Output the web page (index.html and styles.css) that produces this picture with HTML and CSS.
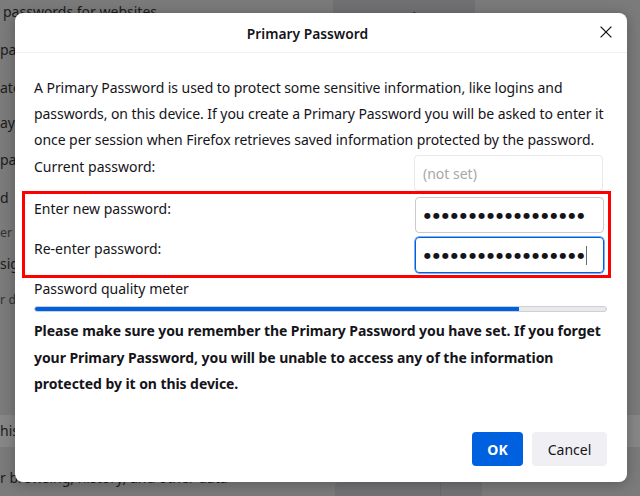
FILE: index.html
```html
<!DOCTYPE html>
<html lang="en">
<head>
<meta charset="utf-8">
<title>Primary Password</title>
<link rel="stylesheet" href="styles.css">
</head>
<body>
<div class="page">
  <div class="row r1">
    <span class="lead">passwords for websites</span>
    <span class="exc">Exceptions</span>
  </div>
  <div class="row r2"><span>pa</span></div>
  <div class="row r3"><span>ate</span></div>
  <div class="row r4"><span>ay</span></div>
  <div class="row r5"><span>pas</span></div>
  <div class="row r6"><span>d</span></div>
  <div class="row r7 small"><span>er P</span></div>
  <div class="row r8"><span>sig</span></div>
  <div class="row r9 small"><span>r de</span></div>
  <div class="row r10 band"><span>his</span></div>
  <div class="row r11"><span>r browsing, history, and other data</span></div>
  <div class="row r12"><div class="bbox"><div class="bbox-a"></div><div class="bbox-b"></div></div></div>
</div>

<div class="dialog" role="dialog" aria-label="Primary Password">
  <div class="dlg-head">
    <h1 class="dlg-title">Primary Password</h1>
    <button class="close" aria-label="Close">
      <svg width="12" height="12" viewBox="0 0 12 12"><path d="M0.6 0.6 L11.4 11.4 M11.4 0.6 L0.6 11.4" stroke="#15141a" stroke-width="1.3" fill="none"/></svg>
    </button>
  </div>
  <div class="dlg-body">
    <p class="intro">A Primary Password is used to protect some sensitive information, like logins and<br>passwords, on this device. If you create a Primary Password you will be asked to enter it<br>once per session when Firefox retrieves saved information protected by the password.</p>
    <div class="field">
      <label class="lbl">Current password:</label>
      <div class="input disabled">(not set)</div>
    </div>
    <div class="highlight">
      <div class="field">
        <label class="lbl">Enter new password:</label>
        <div class="input"><span class="dots">●●●●●●●●●●●●●●●●●●</span></div>
      </div>
      <div class="field second">
        <label class="lbl">Re-enter password:</label>
        <div class="input focus"><span class="dots">●●●●●●●●●●●●●●●●●●</span><span class="caret"></span></div>
      </div>
    </div>
    <div class="meter-lbl">Password quality meter</div>
    <div class="meter"><div class="meter-fill" style="width:85%"></div></div>
    <p class="warn">Please make sure you remember the Primary Password you have set. If you forget<br>your Primary Password, you will be unable to access any of the information<br>protected by it on this device.</p>
    <div class="buttons">
      <button class="btn primary">OK</button>
      <button class="btn cancel">Cancel</button>
    </div>
  </div>
</div>
</body>
</html>
```
FILE: styles.css
```css
* { box-sizing: border-box; }
html, body { margin: 0; padding: 0; }
body {
  width: 640px;
  height: 496px;
  overflow: hidden;
  background: #7b7b7b;
  font-family: "Noto Sans", "Open Sans", sans-serif;
  color: #1b1b1d;
  position: relative;
}

/* dimmed page behind the dialog */
.page { display: flex; flex-direction: column; }
.row { height: 24px; line-height: 24px; font-size: 14px; white-space: nowrap; }
.r1 { display: flex; padding-left: 3px; }
.r1 .lead { width: 330px; }
.exc {
  display: block;
  width: 142px;
  height: 36px;
  line-height: 36px;
  margin-top: 0;
  background: #717173;
  border-radius: 0 0 4px 4px;
  text-align: center;
  font-weight: 600;
}
.r2 { margin-top: 14px; }
.r3 { margin-top: 14px; }
.r4 { margin-top: 11px; }
.r5 { margin-top: 13px; }
.r6 { margin-top: 14px; }
.r7 { margin-top: 11px; }
.r8 { margin-top: 7px; }
.r9 { margin-top: 12px; }
.small { font-size: 12.5px; color: #333336; }
.band { margin-top: 103px; height: 32px; line-height: 32px; background: #878787; }
.r11 { margin-top: 19px; }
.r12 { margin-top: -8px; height: 30px; }
.bbox { margin-left: 335px; width: 147px; height: 30px; display: flex; }
.bbox-a { width: 105px; background: #737375; border-radius: 4px 0 0 0; }
.bbox-b { flex: 1; background: #737375; border-left: 1px solid #6a6a6c; }

/* dialog */
.dialog {
  position: absolute;
  left: 15px;
  top: 13px;
  width: 612px;
  height: 469px;
  background: #fff;
  border-radius: 8px;
  box-shadow: 0 2px 14px rgba(0,0,0,0.28);
  display: flex;
  flex-direction: column;
  color: #15141a;
}
.dlg-head {
  height: 40px;
  border-bottom: 1px solid #f0f0f4;
  display: flex;
  align-items: center;
  padding: 2px 15px 0 0;
}
.dlg-title {
  flex: 1;
  margin: 0;
  text-align: center;
  font-size: 13.8px;
  font-weight: 600;
  line-height: 20px;
}
.close {
  width: 12px;
  height: 12px;
  padding: 0;
  border: 0;
  background: none;
  display: flex;
  margin-top: -4px;
}
.dlg-body {
  flex: 1;
  display: flex;
  flex-direction: column;
  padding: 0 20px 16px 19px;
}
.intro {
  margin: 22px 0 0;
  font-size: 14px;
  letter-spacing: -0.06px;
  line-height: 26px;
  white-space: nowrap;
}
.field {
  display: flex;
  align-items: flex-start;
  justify-content: space-between;
  margin-top: 2px;
  padding-right: 4px;
}
.lbl { font-size: 14px; line-height: 24px; }
.input {
  width: 189px;
  height: 36px;
  border: 1px solid #c9c9cf;
  border-radius: 4px;
  padding-left: 8px;
  display: flex;
  align-items: center;
  font-size: 14px;
}
.input.disabled { border-color: #e9e9ec; color: #a7a7ab; }
.input.focus { border-color: #0061e0; box-shadow: 0 0 0 0.5px #0061e0; }
.dots {
  font-family: "DejaVu Sans", sans-serif;
  font-size: 8px;
  letter-spacing: 2.05px;
  color: #15141a;
  margin-top: 1px;
}
.caret { width: 1px; height: 19px; background: #6b6b70; margin-left: -1px; }
.highlight {
  border: 3px solid #ff0000;
  margin: 0 -4px 0 -12px;
  padding: 3px 4px 2px 9px;
}
.highlight .field { margin-top: 0; padding-right: 0; }
.highlight .field.second { margin-top: 4px; }
.meter-lbl { font-size: 14px; line-height: 22px; margin-top: 0; }
.meter {
  margin-top: 6px;
  height: 6px;
  border: 1px solid #cfcfd4;
  background: #e9e9ed;
  border-radius: 3px;
  overflow: hidden;
}
.meter-fill { background: #0061e0; margin: -1px 0 0 -1px; height: 6px; }
.warn {
  margin: 6px 0 0;
  font-size: 14px;
  font-weight: 700;
  letter-spacing: -0.07px;
  line-height: 26.5px;
  white-space: nowrap;
}
.buttons {
  margin-top: auto;
  display: flex;
  justify-content: flex-end;
  gap: 9px;
}
.btn {
  height: 34px;
  border: 0;
  border-radius: 4px;
  background: #f0f0f4;
  color: #15141a;
  font-family: inherit;
  font-size: 14px;
  padding: 0;
}
.btn.cancel { width: 75px; }
.btn.primary { width: 51px; background: #0061e0; color: #fff; font-weight: 700; }
```
